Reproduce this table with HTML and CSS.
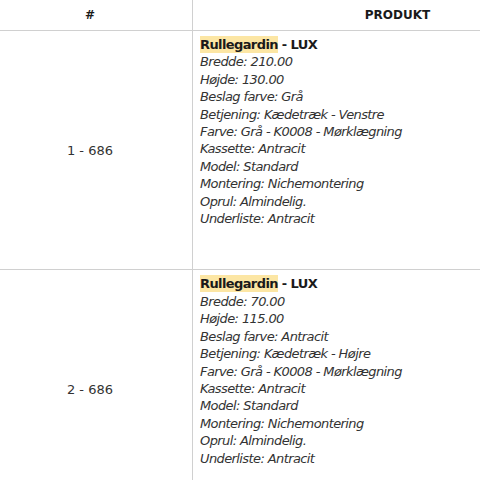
FILE: index.html
```html
<!DOCTYPE html>
<html lang="da">
<head>
<meta charset="utf-8">
<link rel="stylesheet" href="styles.css">
</head>
<body>
<table class="order-table">
  <thead>
    <tr>
      <th class="col-num">#</th>
      <th class="col-prod">PRODUKT</th>
    </tr>
  </thead>
  <tbody>
    <tr>
      <td class="cell-num">1 - 686</td>
      <td class="cell-prod">
        <div class="prod-title"><span class="hl">Rullegardin</span> - LUX</div>
        <div class="attr">Bredde: 210.00</div>
        <div class="attr">Højde: 130.00</div>
        <div class="attr">Beslag farve: Grå</div>
        <div class="attr">Betjening: Kædetræk - Venstre</div>
        <div class="attr">Farve: Grå - K0008 - Mørklægning</div>
        <div class="attr">Kassette: Antracit</div>
        <div class="attr">Model: Standard</div>
        <div class="attr">Montering: Nichemontering</div>
        <div class="attr">Oprul: Almindelig.</div>
        <div class="attr">Underliste: Antracit</div>
      </td>
    </tr>
    <tr>
      <td class="cell-num">2 - 686</td>
      <td class="cell-prod">
        <div class="prod-title"><span class="hl">Rullegardin</span> - LUX</div>
        <div class="attr">Bredde: 70.00</div>
        <div class="attr">Højde: 115.00</div>
        <div class="attr">Beslag farve: Antracit</div>
        <div class="attr">Betjening: Kædetræk - Højre</div>
        <div class="attr">Farve: Grå - K0008 - Mørklægning</div>
        <div class="attr">Kassette: Antracit</div>
        <div class="attr">Model: Standard</div>
        <div class="attr">Montering: Nichemontering</div>
        <div class="attr">Oprul: Almindelig.</div>
        <div class="attr">Underliste: Antracit</div>
      </td>
    </tr>
  </tbody>
</table>
</body>
</html>
```
FILE: styles.css
```css
html, body {
  margin: 0;
  padding: 0;
  background: #fff;
  overflow: hidden;
}
body {
  font-family: "DejaVu Sans", Verdana, sans-serif;
  font-size: 13px;
  color: #222;
}
.order-table {
  border-collapse: collapse;
  margin-left: -12px;
  width: 613px;
  table-layout: fixed;
}
.col-num { width: 204px; }
.col-prod { width: 409px; }
th {
  height: 30px;
  padding: 0;
  font-size: 12px;
  font-weight: bold;
  color: #1a1a1a;
  text-align: center;
  vertical-align: middle;
  border-bottom: 1px solid #d0d0d0;
}
th.col-num { border-right: 1px solid #d0d0d0; }
td {
  border-bottom: 1px solid #d0d0d0;
  vertical-align: middle;
}
.cell-num {
  text-align: center;
  border-right: 1px solid #d0d0d0;
  color: #333;
}
.cell-prod {
  padding: 5px 7px 42px 7px;
  font-size: 13px;
  letter-spacing: -0.6px;
  line-height: 17.4px;
  color: #333;
}
.prod-title {
  font-weight: bold;
  color: #1a1a1a;
}
.hl {
  background: #fce6a4;
  padding: 1px 0;
}
.attr {
  font-style: italic;
}
```
